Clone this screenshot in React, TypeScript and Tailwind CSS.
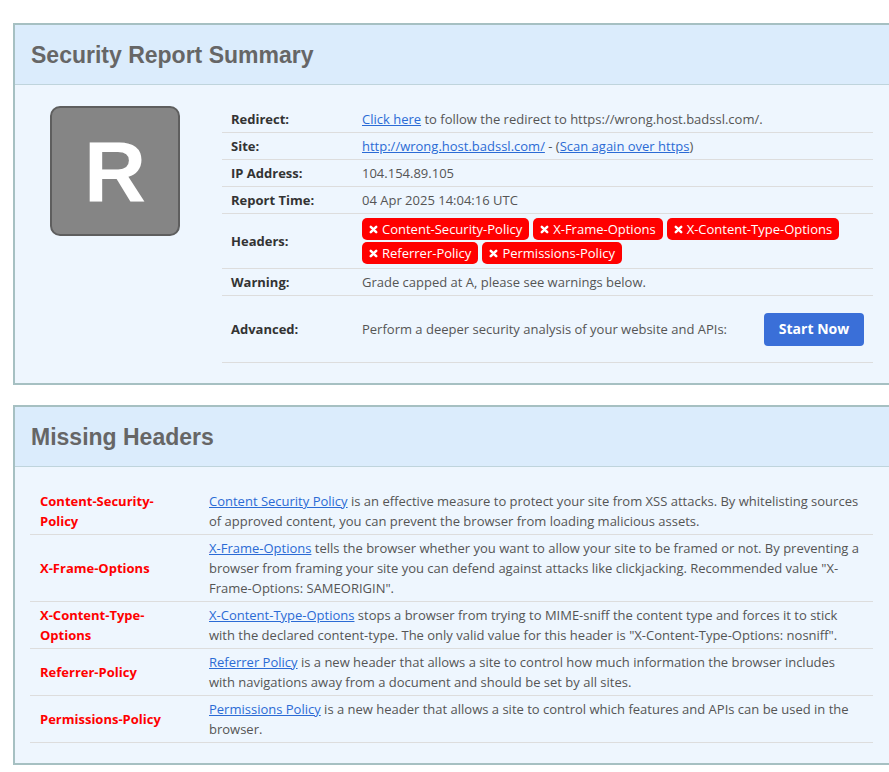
const summaryRows = [
  { label: "Redirect:", kind: "redirect" },
  { label: "Site:", kind: "site" },
  { label: "IP Address:", kind: "text", value: "104.154.89.105" },
  { label: "Report Time:", kind: "text", value: "04 Apr 2025 14:04:16 UTC" },
  { label: "Headers:", kind: "headers" },
  { label: "Warning:", kind: "text", value: "Grade capped at A, please see warnings below." },
  { label: "Advanced:", kind: "advanced" },
];

const missingHeaders = [
  "Content-Security-Policy",
  "X-Frame-Options",
  "X-Content-Type-Options",
  "Referrer-Policy",
  "Permissions-Policy",
];

const missing = [
  {
    name: "Content-Security-Policy",
    link: "Content Security Policy",
    text: " is an effective measure to protect your site from XSS attacks. By whitelisting sources of approved content, you can prevent the browser from loading malicious assets.",
  },
  {
    name: "X-Frame-Options",
    link: "X-Frame-Options",
    text: ' tells the browser whether you want to allow your site to be framed or not. By preventing a browser from framing your site you can defend against attacks like clickjacking. Recommended value "X-Frame-Options: SAMEORIGIN".',
  },
  {
    name: "X-Content-Type-Options",
    link: "X-Content-Type-Options",
    text: ' stops a browser from trying to MIME-sniff the content type and forces it to stick with the declared content-type. The only valid value for this header is "X-Content-Type-Options: nosniff".',
  },
  {
    name: "Referrer-Policy",
    link: "Referrer Policy",
    text: " is a new header that allows a site to control how much information the browser includes with navigations away from a document and should be set by all sites.",
  },
  {
    name: "Permissions-Policy",
    link: "Permissions Policy",
    text: " is a new header that allows a site to control which features and APIs can be used in the browser.",
  },
];

function Cross() {
  return (
    <svg viewBox="0 0 10 10" className="mr-[4px] h-[9px] w-[9px]">
      <path d="M2 2 L8 8 M8 2 L2 8" stroke="white" strokeWidth="2.8" strokeLinecap="round" />
    </svg>
  );
}

function Badge({ name }: { name: string }) {
  return (
    <span className="inline-flex h-[22px] items-center rounded-[5px] bg-[#ff0000] px-[7px] text-[13px] text-white">
      <Cross />
      {name}
    </span>
  );
}

function Link({ children }: { children: React.ReactNode }) {
  return <a className="cursor-pointer text-[#2b6bd5] underline">{children}</a>;
}

function Panel({ title, children }: { title: string; children: React.ReactNode }) {
  return (
    <div className="ml-[13px] w-[900px] border-2 border-[#a6c0c2] bg-[#eef6fe]">
      <div className="flex h-[60px] items-center border-b border-[#bfd4dc] bg-[#dbecfc] pl-[16px]">
        <h2 className="font-['Liberation_Sans',Arial,sans-serif] text-[23px] font-bold text-[#666666]">
          {title}
        </h2>
      </div>
      {children}
    </div>
  );
}

function SummaryValue({ row }: { row: (typeof summaryRows)[number] }) {
  if (row.kind === "redirect")
    return (
      <span>
        <Link>Click here</Link> to follow the redirect to https://wrong.host.badssl.com/.
      </span>
    );
  if (row.kind === "site")
    return (
      <span>
        <Link>http://wrong.host.badssl.com/</Link> - (<Link>Scan again over https</Link>)
      </span>
    );
  if (row.kind === "headers")
    return (
      <div className="flex flex-wrap gap-x-[4px] gap-y-[2px] py-[1px]">
        {missingHeaders.map((h) => (
          <Badge key={h} name={h} />
        ))}
      </div>
    );
  if (row.kind === "advanced")
    return (
      <div className="flex h-[60px] items-center justify-between pr-[9px]">
        <span>Perform a deeper security analysis of your website and APIs:</span>
        <button className="h-[33px] w-[100px] rounded-[4px] bg-[#3a6fd8] text-[14px] font-bold text-white">
          Start Now
        </button>
      </div>
    );
  return <span>{row.value}</span>;
}

export default function App() {
  return (
    <div className="h-[772px] w-[889px] overflow-hidden bg-white pt-[23px] font-['Open_Sans','Noto_Sans',sans-serif] text-[13px] leading-[20px] text-[#555555]">
      <Panel title="Security Report Summary">
        <div className="flex px-[15px] pt-[21px] pb-[20px]">
          <div className="w-[192px] pl-[20px]">
            <div className="flex h-[130px] w-[130px] items-center justify-center rounded-[10px] border-2 border-[#5e5e5e] bg-[#858585]">
              <span className="font-['Liberation_Sans',Arial,sans-serif] text-[86px] leading-none font-bold text-white">
                R
              </span>
            </div>
          </div>
          <div className="w-[651px]">
            {summaryRows.map((row) => (
              <div key={row.label} className="flex items-center border-b border-[#dddddd] py-[3px]">
                <div className="w-[140px] shrink-0 pl-[9px] font-bold text-[#333333]">{row.label}</div>
                <div className="flex-1">
                  <SummaryValue row={row} />
                </div>
              </div>
            ))}
          </div>
        </div>
      </Panel>

      <div className="h-[20px]" />

      <Panel title="Missing Headers">
        <div className="px-[15px] pt-[21px] pb-[20px]">
          <div className="w-[843px]">
            {missing.map((m) => (
              <div key={m.name} className="flex items-center border-b border-[#dddddd] py-[3px]">
                <div className="w-[170px] shrink-0 pr-[30px] pl-[10px] font-bold text-[#ff0000]">{m.name}</div>
                <div className="flex-1 pl-[9px] pr-[10px]">
                  <Link>{m.link}</Link>
                  {m.text}
                </div>
              </div>
            ))}
          </div>
        </div>
      </Panel>
    </div>
  );
}
